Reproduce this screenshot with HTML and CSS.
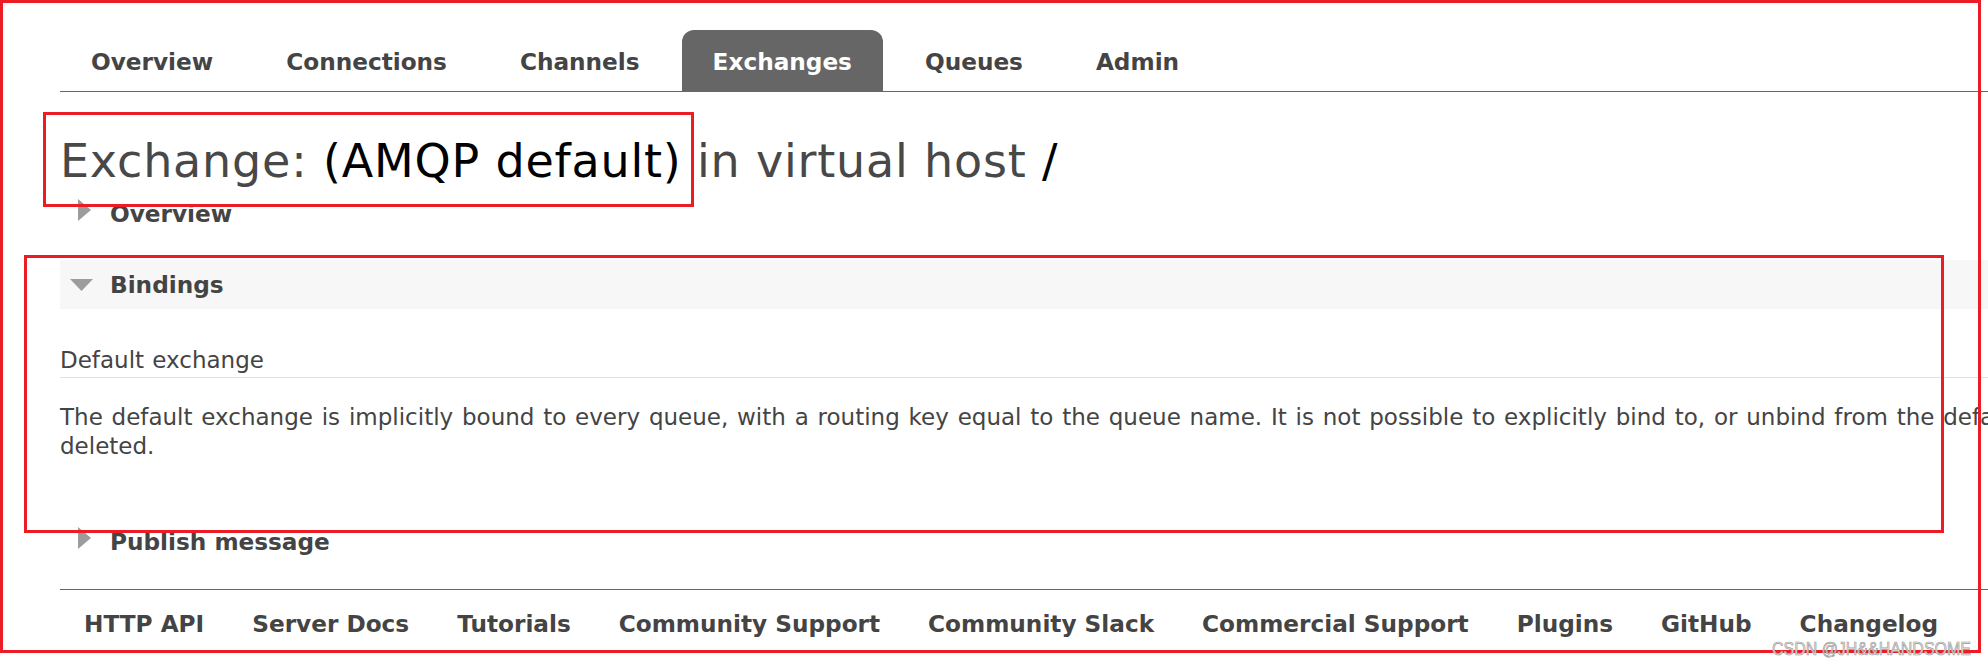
FILE: index.html
```html
<!DOCTYPE html>
<html lang="en">
<head>
<meta charset="utf-8">
<title>RabbitMQ Management - Exchange: (AMQP default)</title>
<link rel="stylesheet" href="styles.css">
</head>
<body>
<div class="page">
  <ul class="tabs">
    <li class="tab">Overview</li>
    <li class="tab">Connections</li>
    <li class="tab">Channels</li>
    <li class="tab tab-active">Exchanges</li>
    <li class="tab">Queues</li>
    <li class="tab">Admin</li>
  </ul>

  <h1 class="title"><span class="title-muted">Exchange:</span> <span class="title-strong">(AMQP default)</span> <span class="title-muted">in virtual host</span> <span class="title-strong">/</span></h1>

  <div class="section">
    <h2 class="section-head">
      <svg class="section-icon" width="50" height="49" viewBox="0 0 50 49"><polygon points="18,10 31,21 18,32" fill="#9c9c9c"/></svg>
      <span>Overview</span>
    </h2>
  </div>

  <div class="section section-open">
    <h2 class="section-head section-head-open">
      <svg class="section-icon" width="50" height="49" viewBox="0 0 50 49"><polygon points="10,19 33,19 21.5,31" fill="#9c9c9c"/></svg>
      <span>Bindings</span>
    </h2>
    <div class="section-body">
      <h3 class="subhead">Default exchange</h3>
      <p class="desc">The default exchange is implicitly bound to every queue, with a routing key equal to the queue name. It is not possible to explicitly bind to, or unbind from the default exchange. It also cannot be<br>deleted.</p>
    </div>
  </div>

  <div class="section">
    <h2 class="section-head">
      <svg class="section-icon" width="50" height="49" viewBox="0 0 50 49"><polygon points="18,10 31,21 18,32" fill="#9c9c9c"/></svg>
      <span>Publish message</span>
    </h2>
  </div>

  <ul class="footer">
    <li class="footer-link">HTTP API</li>
    <li class="footer-link">Server Docs</li>
    <li class="footer-link">Tutorials</li>
    <li class="footer-link">Community Support</li>
    <li class="footer-link">Community Slack</li>
    <li class="footer-link">Commercial Support</li>
    <li class="footer-link">Plugins</li>
    <li class="footer-link">GitHub</li>
    <li class="footer-link">Changelog</li>
  </ul>
</div>

<div class="anno anno-outer"></div>
<div class="anno anno-title"></div>
<div class="anno anno-bindings"></div>
<div class="watermark">CSDN @JH&amp;&amp;HANDSOME</div>
</body>
</html>
```

FILE: styles.css
```css
html, body {
  margin: 0;
  padding: 0;
  width: 1988px;
  height: 667px;
  overflow: hidden;
  background: #ffffff;
}

body {
  position: relative;
  font-family: "DejaVu Sans", Verdana, sans-serif;
  color: #444444;
}

.page {
  width: 2800px;
  padding: 30px 0 0 60px;
}

/* top navigation */
.tabs {
  list-style: none;
  margin: 0;
  padding: 0;
  display: flex;
  gap: 11px;
  border-bottom: 1px solid #666666;
}

.tab {
  box-sizing: border-box;
  height: 61px;
  padding: 2px 31px 0;
  line-height: 59px;
  font-size: 23.2px;
  font-weight: bold;
  color: #444444;
  white-space: nowrap;
}

.tab-active {
  background: #666666;
  color: #ffffff;
  border-radius: 12px 12px 0 0;
}

/* title */
.title {
  margin: 46px 0 0;
  font-size: 46px;
  line-height: 47px;
  font-weight: normal;
  letter-spacing: 0.8px;
  white-space: nowrap;
}

.title-muted {
  color: #484848;
}

.title-strong {
  color: #000000;
}

/* sections */
.section {
  margin-top: 22px;
}

.title + .section {
  margin-top: 4px;
}

.section-head {
  display: flex;
  align-items: flex-start;
  height: 49px;
  margin: 0;
  font-size: 23.2px;
  line-height: 49px;
  font-weight: bold;
  color: #444444;
  white-space: nowrap;
}

.section-head-open {
  background: #f7f7f7;
}

.section-icon {
  display: block;
  flex: 0 0 50px;
}

.section-body {
  padding-bottom: 34px;
}

.subhead {
  margin: 37px 0 0;
  padding-bottom: 2px;
  border-bottom: 1px solid #e2e2e2;
  font-size: 23px;
  line-height: 29px;
  font-weight: normal;
  word-spacing: 1px;
}

.desc {
  margin: 25px 0 0;
  font-size: 23px;
  line-height: 29px;
  word-spacing: 1.5px;
  white-space: nowrap;
}

/* footer */
.footer {
  list-style: none;
  display: flex;
  margin: 23px 0 0;
  padding: 9px 0 0;
  border-top: 1px solid #666666;
}

.footer-link {
  padding: 0 24px;
  font-size: 23.2px;
  line-height: 49px;
  font-weight: bold;
  color: #444444;
  white-space: nowrap;
}

/* red annotation boxes drawn over the screenshot */
.anno {
  position: absolute;
  box-sizing: border-box;
  border: 3px solid #ec1c24;
  pointer-events: none;
}

.anno-outer {
  left: 0;
  top: 0;
  width: 1981px;
  height: 653px;
}

.anno-title {
  left: 43px;
  top: 112px;
  width: 651px;
  height: 95px;
}

.anno-bindings {
  left: 24px;
  top: 255px;
  width: 1920px;
  height: 278px;
}

.watermark {
  position: absolute;
  left: 1772px;
  top: 639px;
  font-family: "Liberation Sans", Arial, sans-serif;
  font-size: 19px;
  line-height: 20px;
  color: #e6e6e6;
  -webkit-text-stroke: 0.7px #9a9a9a;
  transform: scaleX(0.84);
  transform-origin: left top;
  white-space: nowrap;
}
```
